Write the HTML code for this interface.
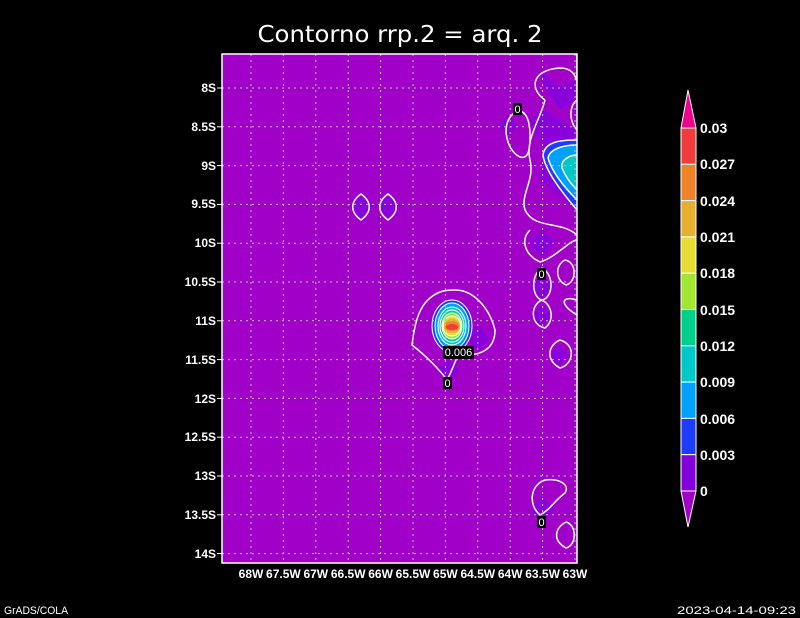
<!DOCTYPE html>
<html><head><style>
html,body{margin:0;padding:0;background:#000;width:800px;height:618px;overflow:hidden}
svg{display:block}
text{font-family:"Liberation Sans",sans-serif;fill:#fff}
</style></head><body>
<svg width="800" height="618" viewBox="0 0 800 618" xmlns="http://www.w3.org/2000/svg">
<rect width="800" height="618" fill="#000"/>
<text x="400" y="42" font-size="23" text-anchor="middle" style="font-family:'DejaVu Sans',sans-serif" textLength="285" lengthAdjust="spacingAndGlyphs">Contorno rrp.2 = arq. 2</text>
<defs><clipPath id="c"><rect x="222" y="54" width="355" height="509"/></clipPath></defs>
<rect x="222" y="54" width="355" height="509" fill="#a000c8"/>
<g clip-path="url(#c)">
<g fill="#8a00dc">
<path d="M540 70 L560 88 L575 80 L575 100 L560 110 L545 88 Z"/>
<path d="M530 120 L545 150 L540 180 L565 200 L575 210 L575 130 L545 110 Z"/>
<path d="M508 115 L518 125 L508 135 L498 125 Z"/>
<path d="M361 194 L373 206 L361 218 L349 206 Z"/>
<path d="M388 194 L400 206 L388 218 L376 206 Z"/>
<path d="M542 230 L555 243 L542 256 L529 243 Z"/>
<path d="M542 275 L555 287 L542 299 L529 287 Z"/>
<path d="M542 305 L553 316 L542 327 L531 316 Z"/>
<path d="M558 345 L568 356 L558 366 L548 356 Z"/>
<path d="M445 320 L460 335 L448 350 L430 335 Z"/>
<path d="M478 325 L490 338 L478 352 L466 338 Z"/>
<path d="M448 360 L460 370 L448 382 L436 370 Z"/>
<path d="M542 497 L555 510 L542 522 L529 510 Z"/>
</g>
<path d="M577 140 C565 140 545 140 543 155 C545 170 560 190 577 210 Z" fill="#1e3cff"/>
<path d="M577 145 C565 145 550 148 548 158 C552 172 565 188 577 200 Z" fill="#00a0ff"/>
<path d="M577 155 C570 155 560 160 562 168 C566 178 572 185 577 190 Z" fill="#00c8c8"/>
<g fill="none" stroke="#fff" stroke-width="1.5">
<path d="M577 140 C565 140 545 140 543 155 C545 170 560 190 577 210"/>
<path d="M577 145 C565 145 550 148 548 158 C552 172 565 188 577 200"/>
<path d="M577 155 C570 155 560 160 562 168 C566 178 572 185 577 190"/>
</g>
<ellipse cx="452" cy="326" rx="20" ry="26" fill="#1e3cff"/>
<ellipse cx="452" cy="326" rx="17" ry="23" fill="#00a0ff"/>
<ellipse cx="452" cy="326" rx="14" ry="19" fill="#00c8c8"/>
<ellipse cx="452" cy="326" rx="12" ry="16" fill="#00d08c"/>
<ellipse cx="452" cy="326" rx="10" ry="13" fill="#a0e632"/>
<ellipse cx="452" cy="326" rx="9" ry="10" fill="#e6dc32"/>
<ellipse cx="452" cy="326" rx="8" ry="7" fill="#e6af2d"/>
<ellipse cx="452" cy="326" rx="7" ry="5" fill="#f08228"/>
<ellipse cx="452" cy="327" rx="6" ry="3" fill="#f03c3c"/>
<g fill="none" stroke="#fff" stroke-width="1">
<ellipse cx="452" cy="326" rx="20" ry="26"/>
<ellipse cx="452" cy="326" rx="17" ry="23"/>
<ellipse cx="452" cy="326" rx="14" ry="19"/>
<ellipse cx="452" cy="326" rx="12" ry="16"/>
<ellipse cx="452" cy="326" rx="10" ry="13"/>
<ellipse cx="452" cy="326" rx="9" ry="10"/>
</g>
<g fill="none" stroke="#fff" stroke-width="1.5">
<path d="M361 194 C372 202 372 212 361 220 C350 212 350 202 361 194 Z"/>
<path d="M388 194 C399 202 399 212 388 220 C377 212 377 202 388 194 Z"/>
<path d="M577 40 L577 100 C570 105 568 120 577 130"/>
<path d="M545 100 C530 90 530 70 560 68 C575 68 578 80 577 90"/>
<path d="M516 112 C500 120 505 150 520 157 C530 160 530 145 530 135 C530 120 525 108 516 112"/>
<path d="M545 100 C540 120 525 140 530 160 C535 180 520 195 525 210 C535 230 560 220 577 235"/>
<path d="M530 230 C520 240 525 255 540 262 C555 258 570 240 577 240"/>
<path d="M542 268 C530 275 532 298 542 300 C553 298 555 275 542 268"/>
<path d="M565 260 C555 265 555 280 566 285 C577 282 577 262 565 260"/>
<path d="M577 300 C560 295 560 305 577 315"/>
<path d="M542 300 C530 305 530 325 545 328 C555 320 552 305 542 300"/>
<path d="M560 340 C548 345 545 360 560 368 C573 365 577 345 560 340"/>
<path d="M440 292 C420 300 415 320 412 345 C425 355 440 370 447 380 C455 365 455 358 460 355 C480 356 495 350 495 330 C490 310 475 290 455 290 C450 290 445 290 440 292"/>
<path d="M545 480 C530 485 528 505 540 515 C550 510 555 500 565 493 C570 485 560 478 545 480"/>
<path d="M566 522 C555 528 552 540 566 548 C577 545 577 525 566 522"/>
</g>
<g stroke="#b4c8a0" stroke-width="1" stroke-dasharray="2,4">
<line x1="251" y1="54" x2="251" y2="563"/><line x1="283.4" y1="54" x2="283.4" y2="563"/><line x1="315.8" y1="54" x2="315.8" y2="563"/><line x1="348.2" y1="54" x2="348.2" y2="563"/><line x1="380.6" y1="54" x2="380.6" y2="563"/><line x1="413" y1="54" x2="413" y2="563"/><line x1="445.4" y1="54" x2="445.4" y2="563"/><line x1="477.8" y1="54" x2="477.8" y2="563"/><line x1="510.2" y1="54" x2="510.2" y2="563"/><line x1="542.6" y1="54" x2="542.6" y2="563"/><line x1="575" y1="54" x2="575" y2="563"/>
<line x1="222" y1="88" x2="577" y2="88"/><line x1="222" y1="126.8" x2="577" y2="126.8"/><line x1="222" y1="165.6" x2="577" y2="165.6"/><line x1="222" y1="204.4" x2="577" y2="204.4"/><line x1="222" y1="243.2" x2="577" y2="243.2"/><line x1="222" y1="282" x2="577" y2="282"/><line x1="222" y1="320.8" x2="577" y2="320.8"/><line x1="222" y1="359.6" x2="577" y2="359.6"/><line x1="222" y1="398.4" x2="577" y2="398.4"/><line x1="222" y1="437.2" x2="577" y2="437.2"/><line x1="222" y1="476" x2="577" y2="476"/><line x1="222" y1="514.8" x2="577" y2="514.8"/><line x1="222" y1="553.6" x2="577" y2="553.6"/>
</g>
</g>
<rect x="513" y="103" width="9" height="12" fill="#000"/><text x="517.5" y="113" font-size="11" text-anchor="middle">0</text>
<rect x="537" y="268" width="9" height="12" fill="#000"/><text x="541.5" y="278" font-size="11" text-anchor="middle">0</text>
<rect x="537" y="516" width="9" height="12" fill="#000"/><text x="541.5" y="526" font-size="11" text-anchor="middle">0</text>
<rect x="443" y="377" width="9" height="12" fill="#000"/><text x="447.5" y="387" font-size="11" text-anchor="middle">0</text>
<rect x="443" y="346" width="31" height="13" fill="#000"/><text x="458.5" y="356" font-size="11" text-anchor="middle">0.006</text>
<rect x="222" y="54" width="355" height="509" fill="none" stroke="#fff" stroke-width="1.5"/>
<g font-size="12" font-weight="bold" text-anchor="end">
<text x="216" y="92">8S</text><text x="216" y="131">8.5S</text><text x="216" y="170">9S</text><text x="216" y="208">9.5S</text><text x="216" y="247">10S</text><text x="216" y="286">10.5S</text><text x="216" y="325">11S</text><text x="216" y="364">11.5S</text><text x="216" y="403">12S</text><text x="216" y="441">12.5S</text><text x="216" y="480">13S</text><text x="216" y="519">13.5S</text><text x="216" y="558">14S</text>
</g>
<g stroke="#fff"><line x1="217" y1="88" x2="222" y2="88"/><line x1="217" y1="126.8" x2="222" y2="126.8"/><line x1="217" y1="165.6" x2="222" y2="165.6"/><line x1="217" y1="204.4" x2="222" y2="204.4"/><line x1="217" y1="243.2" x2="222" y2="243.2"/><line x1="217" y1="282" x2="222" y2="282"/><line x1="217" y1="320.8" x2="222" y2="320.8"/><line x1="217" y1="359.6" x2="222" y2="359.6"/><line x1="217" y1="398.4" x2="222" y2="398.4"/><line x1="217" y1="437.2" x2="222" y2="437.2"/><line x1="217" y1="476" x2="222" y2="476"/><line x1="217" y1="514.8" x2="222" y2="514.8"/><line x1="217" y1="553.6" x2="222" y2="553.6"/></g>
<g font-size="12" font-weight="bold" text-anchor="middle">
<text x="251" y="578">68W</text><text x="283.4" y="578">67.5W</text><text x="315.8" y="578">67W</text><text x="348.2" y="578">66.5W</text><text x="380.6" y="578">66W</text><text x="413" y="578">65.5W</text><text x="445.4" y="578">65W</text><text x="477.8" y="578">64.5W</text><text x="510.2" y="578">64W</text><text x="542.6" y="578">63.5W</text><text x="575" y="578">63W</text>
</g>
<g stroke="#fff" stroke-width="1">
<path d="M688 90 L696 128 L681 128 Z" fill="#f0008c"/>
<rect x="681" y="128" width="15" height="36.3" fill="#f03c3c"/>
<rect x="681" y="164.3" width="15" height="36.3" fill="#f08228"/>
<rect x="681" y="200.6" width="15" height="36.3" fill="#e6af2d"/>
<rect x="681" y="236.9" width="15" height="36.3" fill="#e6dc32"/>
<rect x="681" y="273.2" width="15" height="36.3" fill="#a0e632"/>
<rect x="681" y="309.5" width="15" height="36.3" fill="#00d08c"/>
<rect x="681" y="345.8" width="15" height="36.3" fill="#00c8c8"/>
<rect x="681" y="382.1" width="15" height="36.3" fill="#00a0ff"/>
<rect x="681" y="418.4" width="15" height="36.3" fill="#1e3cff"/>
<rect x="681" y="454.7" width="15" height="36.3" fill="#8200dc"/>
<path d="M681 491 L696 491 L688 527 Z" fill="#a000c8"/>
</g>
<g font-size="14" font-weight="bold">
<text x="700" y="133">0.03</text><text x="700" y="169">0.027</text><text x="700" y="206">0.024</text><text x="700" y="242">0.021</text><text x="700" y="278">0.018</text><text x="700" y="315">0.015</text><text x="700" y="351">0.012</text><text x="700" y="387">0.009</text><text x="700" y="424">0.006</text><text x="700" y="460">0.003</text><text x="700" y="496">0</text>
</g>
<text x="4" y="614" font-size="11" textLength="64" lengthAdjust="spacingAndGlyphs">GrADS/COLA</text>
<text x="677" y="614" font-size="11" textLength="119" lengthAdjust="spacingAndGlyphs">2023-04-14-09:23</text>
</svg>
</body></html>
